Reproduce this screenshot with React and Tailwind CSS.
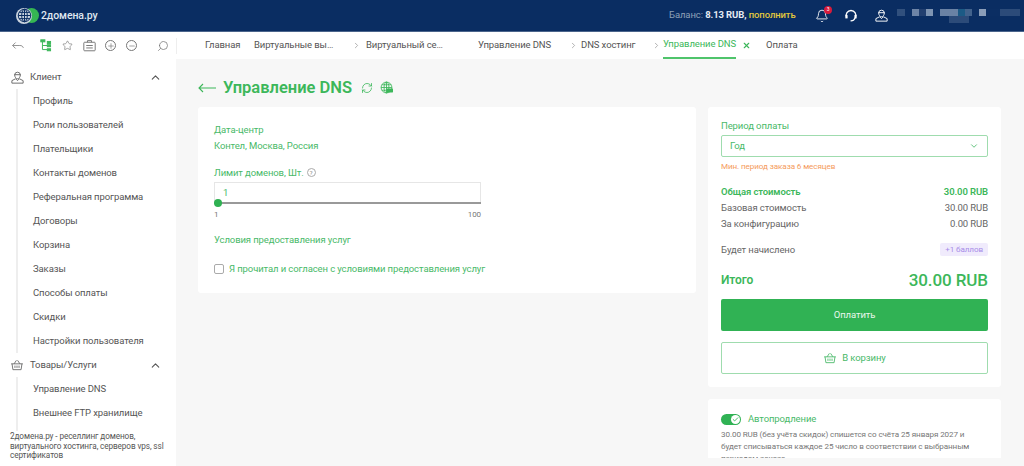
import React from "react";
import { ChevronUp, ChevronDown, Star, Plus, Minus, Search, RefreshCw, ChevronRight, X, Check, Bell } from "lucide-react";

const F = { fontFamily: 'Roboto, sans-serif' };

const Globe = ({ className, dns }) => (
  <svg viewBox="0 0 24 24" className={className} fill="none" stroke="currentColor" strokeWidth="1.6">
    <circle cx="12" cy="12" r="10" />
    <ellipse cx="12" cy="12" rx="4.5" ry="10" />
    <path d="M2 12h20M3.5 7h17M3.5 17h17M12 2v20" />
    {dns && <rect x="12" y="14" width="12" height="7" rx="1" fill="currentColor" stroke="none" />}
  </svg>
);

const Basket = ({ className }) => (
  <svg viewBox="0 0 24 24" className={className} fill="none" stroke="currentColor" strokeWidth="1.5" strokeLinejoin="round">
    <path d="M2 10h20M3.5 10l1.5 10h14l1.5-10M7 10l4-6M17 10l-4-6" />
    <path d="M8.5 13v4M12 13v4M15.5 13v4" />
  </svg>
);

const User = ({ className }) => (
  <svg viewBox="0 0 24 24" className={className} fill="none" stroke="currentColor" strokeWidth="1.5" strokeLinejoin="round">
    <path d="M7.5 8a4.500 4.500 0 0 1 9 0c0 3-2 6-4.500 6S7.500 11 7.500 8z" />
    <path d="M7 7.500h10" />
    <path d="M9 14l-6 3v4h18v-4l-6-3-3 3z" />
  </svg>
);

const Support = ({ className }) => (
  <svg viewBox="0 0 16 16" className={className} fill="none" stroke="currentColor" strokeWidth="1.500" strokeLinecap="round">
    <path d="M3 9.500a5.500 5.500 0 1 1 10 0" />
    <path d="M12.500 10.500c-.8 2-2.400 3-4.500 3" />
    <rect x="2.300" y="7.500" width="1" height="2.500" fill="currentColor" />
    <rect x="12.700" y="7.500" width="1" height="2.500" fill="currentColor" />
  </svg>
);

const Tree = () => (
  <svg viewBox="0 0 16 16" className="h-[13px] w-[13px] text-[#3cb75a]" fill="none" stroke="currentColor" strokeWidth="1.2">
    <path d="M3 3v10h6M3 8h6" />
    <rect x="1" y="1" width="5" height="2.500" fill="currentColor" />
    <rect x="9" y="3" width="4" height="2.500" fill="currentColor" />
    <rect x="9" y="7" width="4" height="2.500" fill="currentColor" />
    <rect x="9" y="12" width="4" height="2.500" fill="currentColor" />
  </svg>
);

const Brief = () => (
  <svg viewBox="0 0 16 16" className="h-[13px] w-[13px] text-[#777]" fill="none" stroke="currentColor" strokeWidth="1.200">
    <rect x="1" y="4" width="14" height="10.500" rx="1" />
    <path d="M5.500 4V2h5v2M4 8h8M4 11h8" />
  </svg>
);

const Back = ({ className }) => (
  <svg viewBox="0 0 20 12" className={className} fill="none" stroke="currentColor" strokeWidth="1.300">
    <path d="M6 1L1 6l5 5M1 6h12c3 0 5 1 6 4" />
  </svg>
);

const clientItems = ["Профиль", "Роли пользователей", "Плательщики", "Контакты доменов", "Реферальная программа", "Договоры", "Корзина", "Заказы", "Способы оплаты", "Скидки", "Настройки пользователя"];
const goodsItems = ["Управление DNS", "Внешнее FTP хранилище"];

const SideGroup = ({ icon, title, items, listClass = "" }) => (
  <div>
    <div className="flex h-[24px] items-center pl-[10px] pr-[14px]">
      <span className="w-[21px] text-[#666]">{icon}</span>
      <span className="ml-[-1px] text-[9.500px] text-[#555]">{title}</span>
      <ChevronUp className="ml-auto h-[13px] w-[13px] text-[#555]" />
    </div>
    <div className={`ml-[16px] border-l-2 border-[#eeeeee] pl-[15px] ${listClass}`}>
      {items.map((t) => (
        <div key={t} className="flex h-[24px] items-center whitespace-nowrap text-[9.500px] text-[#555]">{t}</div>
      ))}
    </div>
  </div>
);

const Sep = () => <ChevronRight className="h-[9px] w-[9px] text-[#999]" />;
const Tab = ({ children, className = "" }) => <span className={`whitespace-nowrap text-[9.500px] text-[#555] ${className}`}>{children}</span>;

const Row = ({ label, value, className = "text-[#666]" }) => (
  <div className={`flex h-[16px] items-center justify-between text-[9.500px] ${className}`}>
    <span>{label}</span>
    <span>{value}</span>
  </div>
);

const blur = ["w-[8px] bg-[#31507d]", "w-[7px] bg-[#0b2e63]", "w-[7px] bg-[#6d84a6]", "w-[7px] bg-[#223f6f]", "w-[7px] bg-[#7e94b2]", "w-[7px] bg-[#0b2e63]", "w-[18px] bg-[#6a82a4]", "w-[7px] bg-[#1c5a85]", "w-[7px] bg-[#42628c]", "w-[7px] bg-[#0b2e63]", "w-[7px] bg-[#8a9db8]", "w-[14px] bg-[#0b2e63]", "w-[20px] bg-[#2c4b79]"];

export default function App() {
  return (
    <div style={F} className="flex h-[466px] w-[1024px] flex-col overflow-hidden bg-[#f7f7f7] tracking-[-0.1px]">
      <header className="flex h-[32px] shrink-0 items-center border-b border-[#4b658c] bg-[#0a2d62]">
        <div className="ml-[16px] flex w-[653px] shrink-0 items-center">
          <div className="relative h-[16px] w-[23px]">
            <span className="absolute right-0 top-0 h-[15px] w-[15px] rounded-full bg-[#35b653]" />
            <span className="absolute left-0 top-0 flex h-[16px] w-[16px] items-center justify-center rounded-full bg-[#c9d3df] text-[#0a2d62]"><Globe className="h-[15px] w-[15px]" /></span>
          </div>
          <span className="ml-[2px] text-[10.500px] font-medium text-[#dfe6ef]">2домена.ру</span>
        </div>
        <div className="w-[146px] shrink-0 whitespace-nowrap text-[9.500px] text-[#8fa0b8]">
          Баланс: <b className="font-bold text-[#e6ebf2]">8.13 RUB,</b> <span className="font-medium text-[#e2c83d]">пополнить</span>
        </div>
        <div className="relative text-white">
          <Bell className="h-[14px] w-[14px]" strokeWidth={1.5} />
          <span className="absolute -right-[3px] -top-[3px] flex h-[8px] w-[8px] items-center justify-center rounded-full bg-[#d81b3c] text-[5px] text-white">3</span>
        </div>
        <Support className="ml-[15px] h-[14px] w-[14px] text-white" />
        <User className="ml-[16px] h-[15px] w-[15px] text-white" />
        <div className="ml-[8px] flex flex-col blur-[0.6px]">
          <div className="flex h-[7px]">
            {blur.map((b, i) => <span key={i} className={`h-[7px] ${b}`} />)}
          </div>
          <div className="ml-[52px] h-[7px] w-[20px] bg-[#2c4b79]" />
        </div>
      </header>

      <div className="flex h-[27px] shrink-0 items-center bg-white">
        <div className="flex h-[16px] w-[177px] shrink-0 items-center border-r border-[#eeeeee] pl-[12px] text-[#777]">
          <Back className="h-[9px] w-[12px]" />
          <span className="ml-[16px]"><Tree /></span>
          <Star className="ml-[9px] h-[11px] w-[11px]" strokeWidth={1.4} />
          <span className="ml-[10px]"><Brief /></span>
          <span className="ml-[9px] flex h-[11px] w-[11px] items-center justify-center rounded-full border border-[#777]"><Plus className="h-[8px] w-[8px]" /></span>
          <span className="ml-[10px] flex h-[11px] w-[11px] items-center justify-center rounded-full border border-[#777]"><Minus className="h-[8px] w-[8px]" /></span>
          <Search className="ml-[20px] h-[12px] w-[12px] -scale-x-100" strokeWidth={1.5} />
        </div>
        <div className="flex h-full items-center">
          <Tab className="ml-[28px] w-[49px]">Главная</Tab>
          <Tab className="w-[98px]">Виртуальные вы…</Tab>
          <span className="w-[14px]"><Sep /></span>
          <Tab className="w-[112px]">Виртуальный се…</Tab>
          <Tab className="w-[91px]">Управление DNS</Tab>
          <span className="w-[12px]"><Sep /></span>
          <Tab className="w-[71px]">DNS хостинг</Tab>
          <span className="w-[11px]"><Sep /></span>
          <span className="flex h-full w-[73px] items-center justify-center whitespace-nowrap border-b-2 border-[#4fc46b] text-[9.500px] text-[#3cb75a]">Управление DNS</span>
          <X className="ml-[6px] h-[9px] w-[9px] text-[#3cb75a]" strokeWidth={3} />
          <Tab className="ml-[15px]">Оплата</Tab>
        </div>
      </div>

      <div className="flex min-h-0 flex-1">
        <aside className="flex w-[176px] shrink-0 flex-col bg-white pt-[6px]">
          <SideGroup icon={<User className="h-[15px] w-[15px]" />} title="Клиент" items={clientItems} />
          <SideGroup icon={<Basket className="h-[14px] w-[14px]" />} title="Товары/Услуги" items={goodsItems} listClass="pb-[6px]" />
          <p className="mt-[1px] pl-[10px] pr-[2px] text-[8.200px] leading-[9.500px] text-[#555]">2домена.ру - реселлинг доменов, виртуального хостинга, серверов vps, ssl сертификатов</p>
        </aside>

        <main className="min-w-0 flex-1 pl-[22px] pr-[23px] pt-[13px]">
          <div className="flex h-[35px] items-start pt-[6px] text-[#3cb75a]">
            <svg viewBox="0 0 18 10" className="mt-[5px] h-[10px] w-[18px]" fill="none" stroke="currentColor" strokeWidth="1.100"><path d="M5 1L1 5l4 4M1 5h17" /></svg>
            <h1 className="ml-[7px] text-[16.500px] font-semibold leading-[20px] tracking-normal">Управление DNS</h1>
            <RefreshCw className="ml-[9px] mt-[4px] h-[12px] w-[12px]" strokeWidth={1.6} />
            <Globe dns className="ml-[7px] mt-[3px] h-[13px] w-[13px]" />
          </div>

          <div className="flex items-start gap-[12px]">
            <section className="h-[186px] w-[498px] rounded-[3px] bg-white pl-[16px] pt-[16px] text-[#48b968]">
              <div className="text-[9.500px]">Дата-центр</div>
              <div className="mt-[2px] text-[9.500px]">Контел, Москва, Россия</div>
              <div className="mt-[12px] flex items-center text-[9.500px]">
                Лимит доменов, Шт.
                <span className="ml-[3px] flex h-[9px] w-[9px] items-center justify-center rounded-full border border-[#aaa] text-[6px] text-[#888]">?</span>
              </div>
              <div className="mt-[2px] h-[20px] w-[267px] border border-b-0 border-[#e6e6e6] pl-[8px] text-[9.500px] leading-[20px]">
                1
              </div>
              <div className="relative h-[2px] w-[267px] bg-[#999]">
                <span className="absolute -top-[3px] left-0 h-[8px] w-[8px] rounded-full bg-[#2fb152]" />
              </div>
              <div className="mt-[5px] flex w-[267px] justify-between text-[8px] text-[#777]"><span>1</span><span>100</span></div>
              <div className="mt-[12px] text-[9.500px]">Условия предоставления услуг</div>
              <label className="mt-[15px] flex items-center text-[9.500px]">
                <span className="h-[10px] w-[10px] rounded-[2px] border border-[#aaa]" />
                <span className="ml-[5px]">Я прочитал и согласен с условиями предоставления услуг</span>
              </label>
            </section>

            <div className="flex w-[293px] shrink-0 flex-col gap-[12px]">
              <section className="h-[280px] rounded-[3px] bg-white px-[13px] pt-[12px]">
                <div className="text-[9.500px] text-[#48b968]">Период оплаты</div>
                <div className="mt-[2px] flex h-[22px] items-center justify-between rounded-[2px] border border-[#9fdcae] px-[8px] text-[9.500px] text-[#48b968]">
                  Год
                  <ChevronDown className="h-[10px] w-[10px]" />
                </div>
                <div className="mt-[3px] text-[8.100px] text-[#f59b5c]">Мин. период заказа 6 месяцев</div>
                <div className="mt-[12px]">
                  <Row label="Общая стоимость" value="30.00 RUB" className="font-semibold text-[#3cb75a]" />
                  <Row label="Базовая стоимость" value="30.00 RUB" />
                  <Row label="За конфигурацию" value="0.00 RUB" />
                </div>
                <div className="mt-[11px] flex h-[13px] items-center justify-between text-[9.500px] text-[#666]">
                  <span>Будет начислено</span>
                  <span className="rounded-[2px] bg-[#f0ebfc] px-[5px] text-[8.100px] leading-[13px] text-[#a78be8]">+1 баллов</span>
                </div>
                <div className="mt-[14px] flex items-center justify-between text-[#3cb75a]">
                  <span className="text-[12px] font-semibold">Итого</span>
                  <span className="text-[17px] font-medium leading-[20px]">30.00 RUB</span>
                </div>
                <button className="mt-[9px] flex h-[32px] w-full items-center justify-center rounded-[2px] bg-[#30b254] text-[9.500px] text-[#e9f7ed]">Оплатить</button>
                <button className="mt-[11px] flex h-[32px] w-full items-center justify-center rounded-[2px] border border-[#9fdcae] text-[9.500px] text-[#48b968]">
                  <Basket className="mr-[5px] h-[14px] w-[14px]" />
                  В корзину
                </button>
              </section>

              <section className="h-[59px] overflow-hidden rounded-t-[3px] bg-white pl-[13px] pr-[18px] pt-[13px]">
                <div className="flex items-center">
                  <span className="flex h-[11px] w-[20px] items-center justify-end rounded-full bg-[#30b254] pr-[1px]">
                    <span className="flex h-[9px] w-[9px] items-center justify-center rounded-full bg-white"><Check className="h-[7px] w-[7px] text-[#30b254]" strokeWidth={3} /></span>
                  </span>
                  <span className="ml-[7px] text-[9.500px] text-[#48b968]">Автопродление</span>
                </div>
                <p className="mt-[2px] text-[8.100px] leading-[12px] text-[#777]">30.00 RUB (без учёта скидок) спишется со счёта 25 января 2027 и будет списываться каждое 25 число в соответствии с выбранным периодом заказа</p>
              </section>
            </div>
          </div>
        </main>
      </div>
    </div>
  );
}
